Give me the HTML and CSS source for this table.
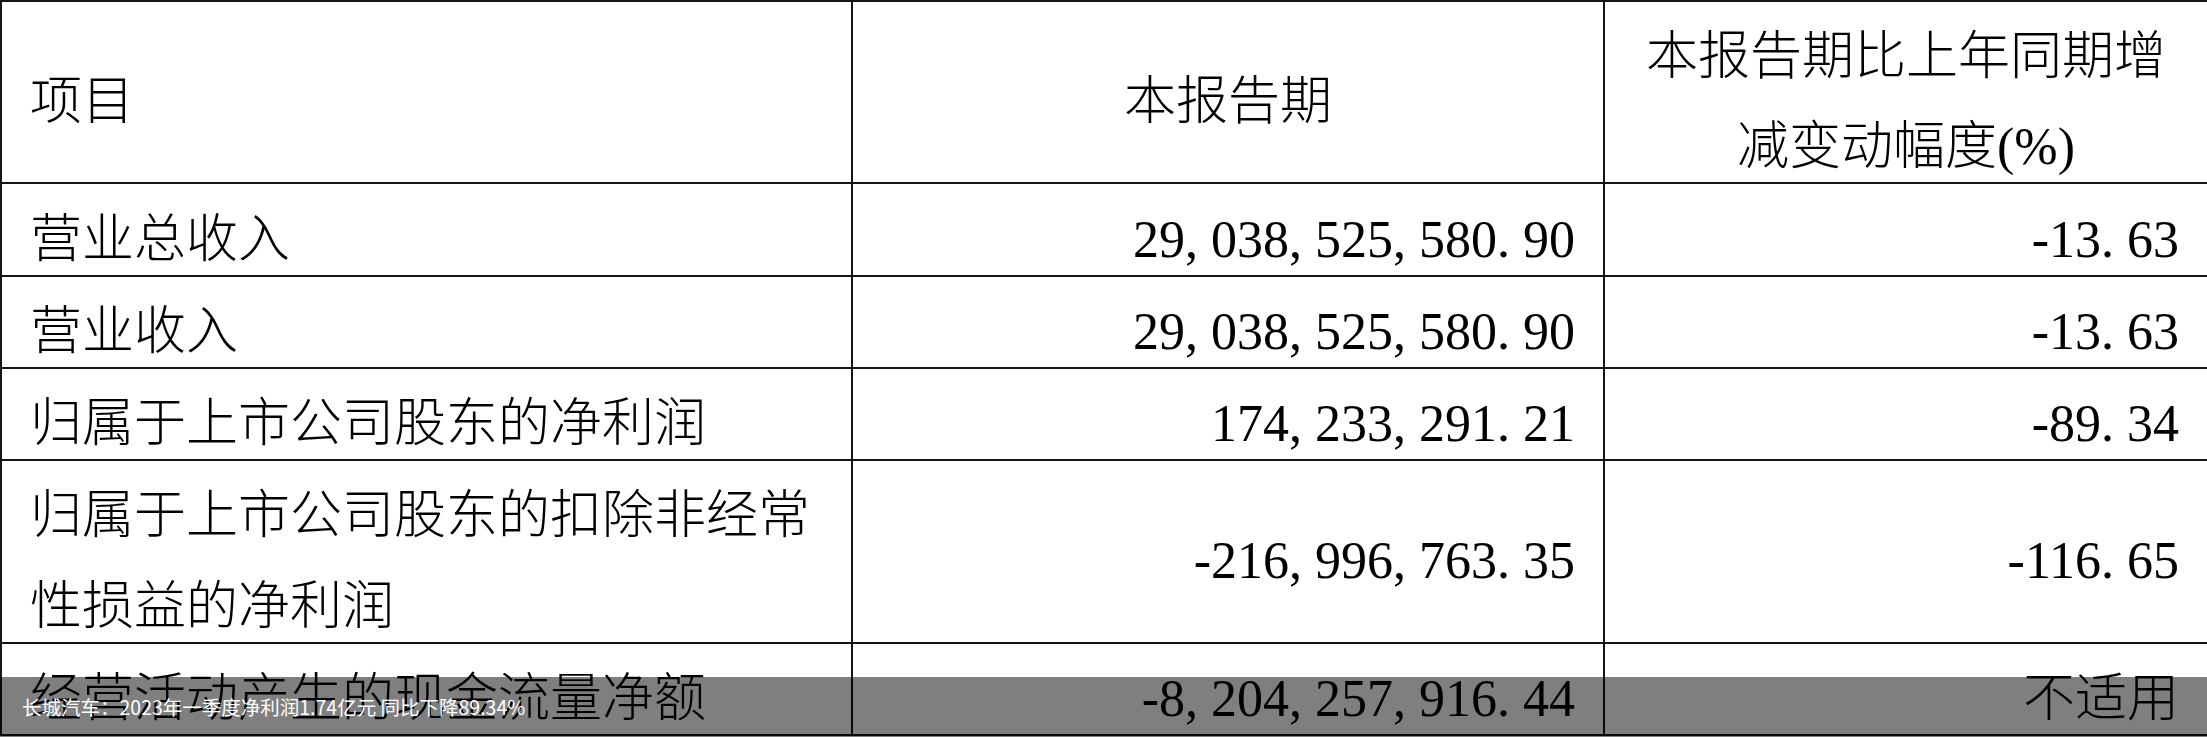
FILE: index.html
```html
<!DOCTYPE html>
<html lang="zh-CN">
<head>
<meta charset="utf-8">
<title>长城汽车：2023年一季度净利润1.74亿元 同比下降89.34%</title>
<link rel="stylesheet" href="styles.css">
</head>
<body>
<div class="page">
  <table class="report">
    <colgroup>
      <col class="c1">
      <col class="c2">
      <col class="c3">
    </colgroup>
    <tbody>
      <tr>
        <td class="lbl"><span class="tx">项目</span></td>
        <td class="ctr"><span class="tx">本报告期</span></td>
        <td class="ctr"><span class="tx">本报告期比上年同期增减变动幅度(%)</span></td>
      </tr>
      <tr class="r1">
        <td class="lbl"><span class="tx">营业总收入</span></td>
        <td class="num"><span class="tx">29<span class="p">,</span>038<span class="p">,</span>525<span class="p">,</span>580<span class="p">.</span>90</span></td>
        <td class="num"><span class="tx"><span class="m">-</span>13<span class="p">.</span>63</span></td>
      </tr>
      <tr>
        <td class="lbl"><span class="tx">营业收入</span></td>
        <td class="num"><span class="tx">29<span class="p">,</span>038<span class="p">,</span>525<span class="p">,</span>580<span class="p">.</span>90</span></td>
        <td class="num"><span class="tx"><span class="m">-</span>13<span class="p">.</span>63</span></td>
      </tr>
      <tr>
        <td class="lbl"><span class="tx">归属于上市公司股东的净利润</span></td>
        <td class="num"><span class="tx">174<span class="p">,</span>233<span class="p">,</span>291<span class="p">.</span>21</span></td>
        <td class="num"><span class="tx"><span class="m">-</span>89<span class="p">.</span>34</span></td>
      </tr>
      <tr class="r4">
        <td class="lbl"><span class="tx">归属于上市公司股东的扣除非经常性损益的净利润</span></td>
        <td class="num"><span class="tx"><span class="m">-</span>216<span class="p">,</span>996<span class="p">,</span>763<span class="p">.</span>35</span></td>
        <td class="num"><span class="tx"><span class="m">-</span>116<span class="p">.</span>65</span></td>
      </tr>
      <tr>
        <td class="lbl"><span class="tx">经营活动产生的现金流量净额</span></td>
        <td class="num"><span class="tx"><span class="m">-</span>8<span class="p">,</span>204<span class="p">,</span>257<span class="p">,</span>916<span class="p">.</span>44</span></td>
        <td class="num"><span class="tx">不适用</span></td>
      </tr>
    </tbody>
  </table>
  <div class="caption">长城汽车：2023年一季度净利润1.74亿元 同比下降89.34%</div>
</div>
</body>
</html>
```
FILE: styles.css
```css
html, body {
  margin: 0;
  padding: 0;
  background: #ffffff;
}

.page {
  position: relative;
  width: 2207px;
  height: 737px;
  overflow: hidden;
}

.report {
  border-collapse: collapse;
  table-layout: fixed;
  width: 2207px;
  font-family: "Liberation Serif", "Noto Sans CJK SC", serif;
  font-weight: 300;
  font-size: 52px;
  line-height: 90px;
  color: #000;
}

.c1 { width: 851px; }
.c2 { width: 752px; }
.c3 { width: 604px; }

.report td {
  border: 2px solid #141414;
  padding: 0 28px;
  vertical-align: middle;
}

.r1 td { line-height: 91px; }
.r4 td { line-height: 90.5px; }

.lbl { text-align: left; }
.ctr { text-align: center; }
.num { text-align: right; }

.tx {
  line-height: 52px;
  vertical-align: -10px;
}

.p {
  display: inline-block;
  width: 0.5em;
  text-align: left;
}

.m {
  display: inline-block;
  width: 0.5em;
  text-align: right;
}

.caption {
  position: absolute;
  left: 0;
  right: 0;
  bottom: 0;
  height: 60px;
  display: flex;
  align-items: center;
  padding-left: 22px;
  background: rgba(0, 0, 0, 0.5);
  color: #ffffff;
  font-family: "Noto Sans CJK SC", "Noto Sans", sans-serif;
  font-size: 19.5px;
  line-height: 1;
}
```
